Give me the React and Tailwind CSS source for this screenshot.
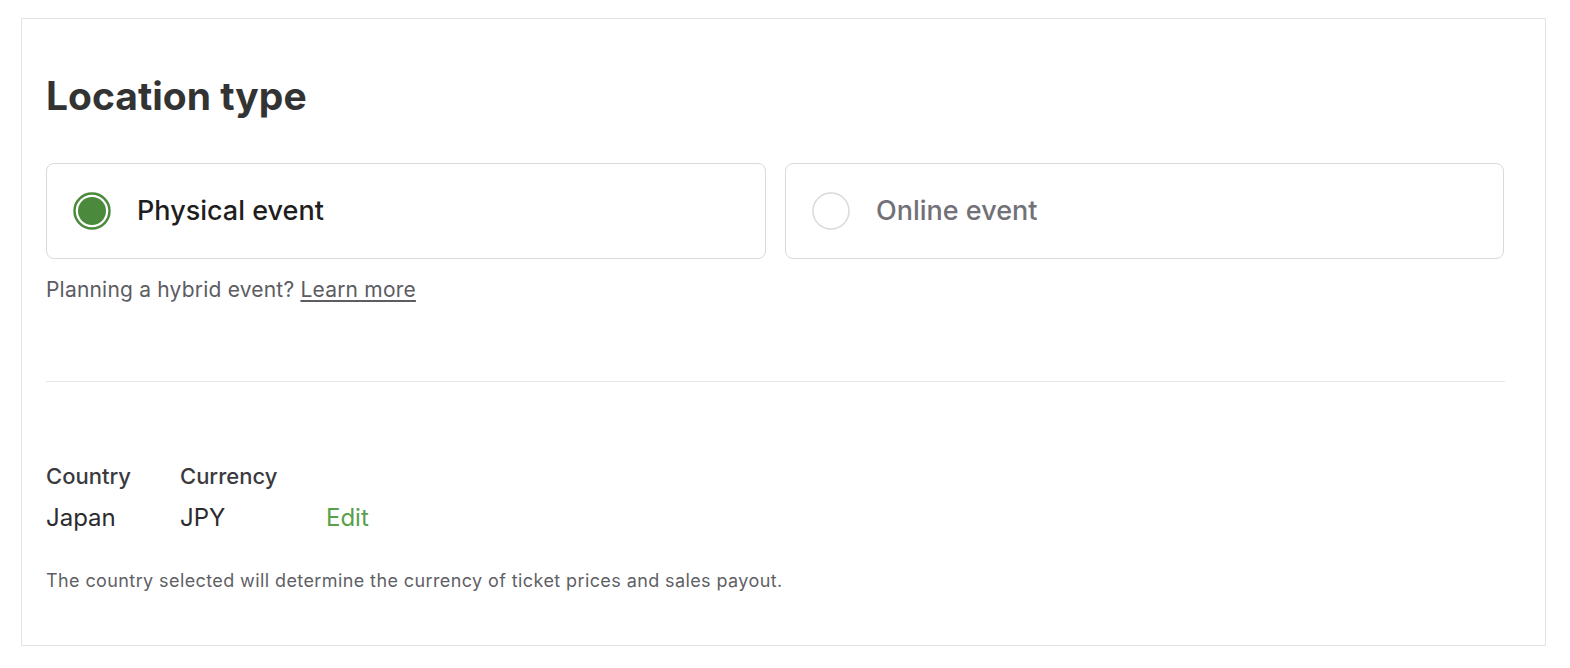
import React, { useState } from 'react'

const font = { fontFamily: 'Inter, "Liberation Sans", Arial, sans-serif' }

const Radio = ({ checked }) => (
  <svg width="38" height="38" viewBox="0 0 38 38" className="shrink-0">
    {checked ? (
      <>
        <circle cx="19" cy="19" r="17.5" fill="none" stroke="#4b8a3c" strokeWidth="2.5" />
        <circle cx="19" cy="19" r="14" fill="#4b8a3c" />
      </>
    ) : (
      <circle cx="19" cy="19" r="18" fill="#fff" stroke="#d9d9de" strokeWidth="1.5" />
    )}
  </svg>
)

const App = () => {
  const [type, setType] = useState('physical')

  return (
    <div className="bg-white min-h-[668px] pt-[18px] pl-[21px]" style={font}>
      <div className="w-[1525px] h-[628px] border border-[#e3e3e6] pl-[24px] pr-[40px] pt-[53px]">
        <h1 className="text-[39px] leading-[48px] font-bold text-[#333333]">Location type</h1>

        <div className="grid grid-cols-[720px_719px] gap-[19px] mt-[43px]">
          <button
            onClick={() => setType('physical')}
            className="h-[96px] border border-[#d9d9de] rounded-[8px] flex items-center pl-[26px] text-left"
          >
            <Radio checked={type === 'physical'} />
            <span className={`ml-[26px] text-[27px] font-medium ${type === 'physical' ? 'text-[#1e1e1e]' : 'text-[#717177]'}`}>Physical event</span>
          </button>
          <button
            onClick={() => setType('online')}
            className="h-[96px] border border-[#d9d9de] rounded-[8px] flex items-center pl-[26px] text-left"
          >
            <Radio checked={type === 'online'} />
            <span className={`ml-[26px] text-[27px] font-medium ${type === 'online' ? 'text-[#1e1e1e]' : 'text-[#717177]'}`}>Online event</span>
          </button>
        </div>

        <p className="mt-[16px] text-[21px] leading-[30px] tracking-[0.2px] text-[#5c5c62]">
          Planning a hybrid event? <a href="#" className="underline underline-offset-[3px]">Learn more</a>
        </p>

        <div className="mt-[76px] border-t border-[#e6e6ea]" />

        <div className="mt-[80px] flex text-[22px] leading-[28px] text-[#3a3a3f] font-medium">
          <div className="w-[134px]">Country</div>
          <div className="w-[146px]">Currency</div>
        </div>
        <div className="mt-[12px] flex text-[24px] leading-[32px] text-[#2b2b30]">
          <div className="w-[134px]">Japan</div>
          <div className="w-[146px]">JPY</div>
          <a href="#" className="text-[#58a04a]">Edit</a>
        </div>

        <p className="mt-[35px] text-[18px] leading-[24px] tracking-[0.4px] text-[#5f5f66]">
          The country selected will determine the currency of ticket prices and sales payout.
        </p>
      </div>
    </div>
  )
}

export default App
